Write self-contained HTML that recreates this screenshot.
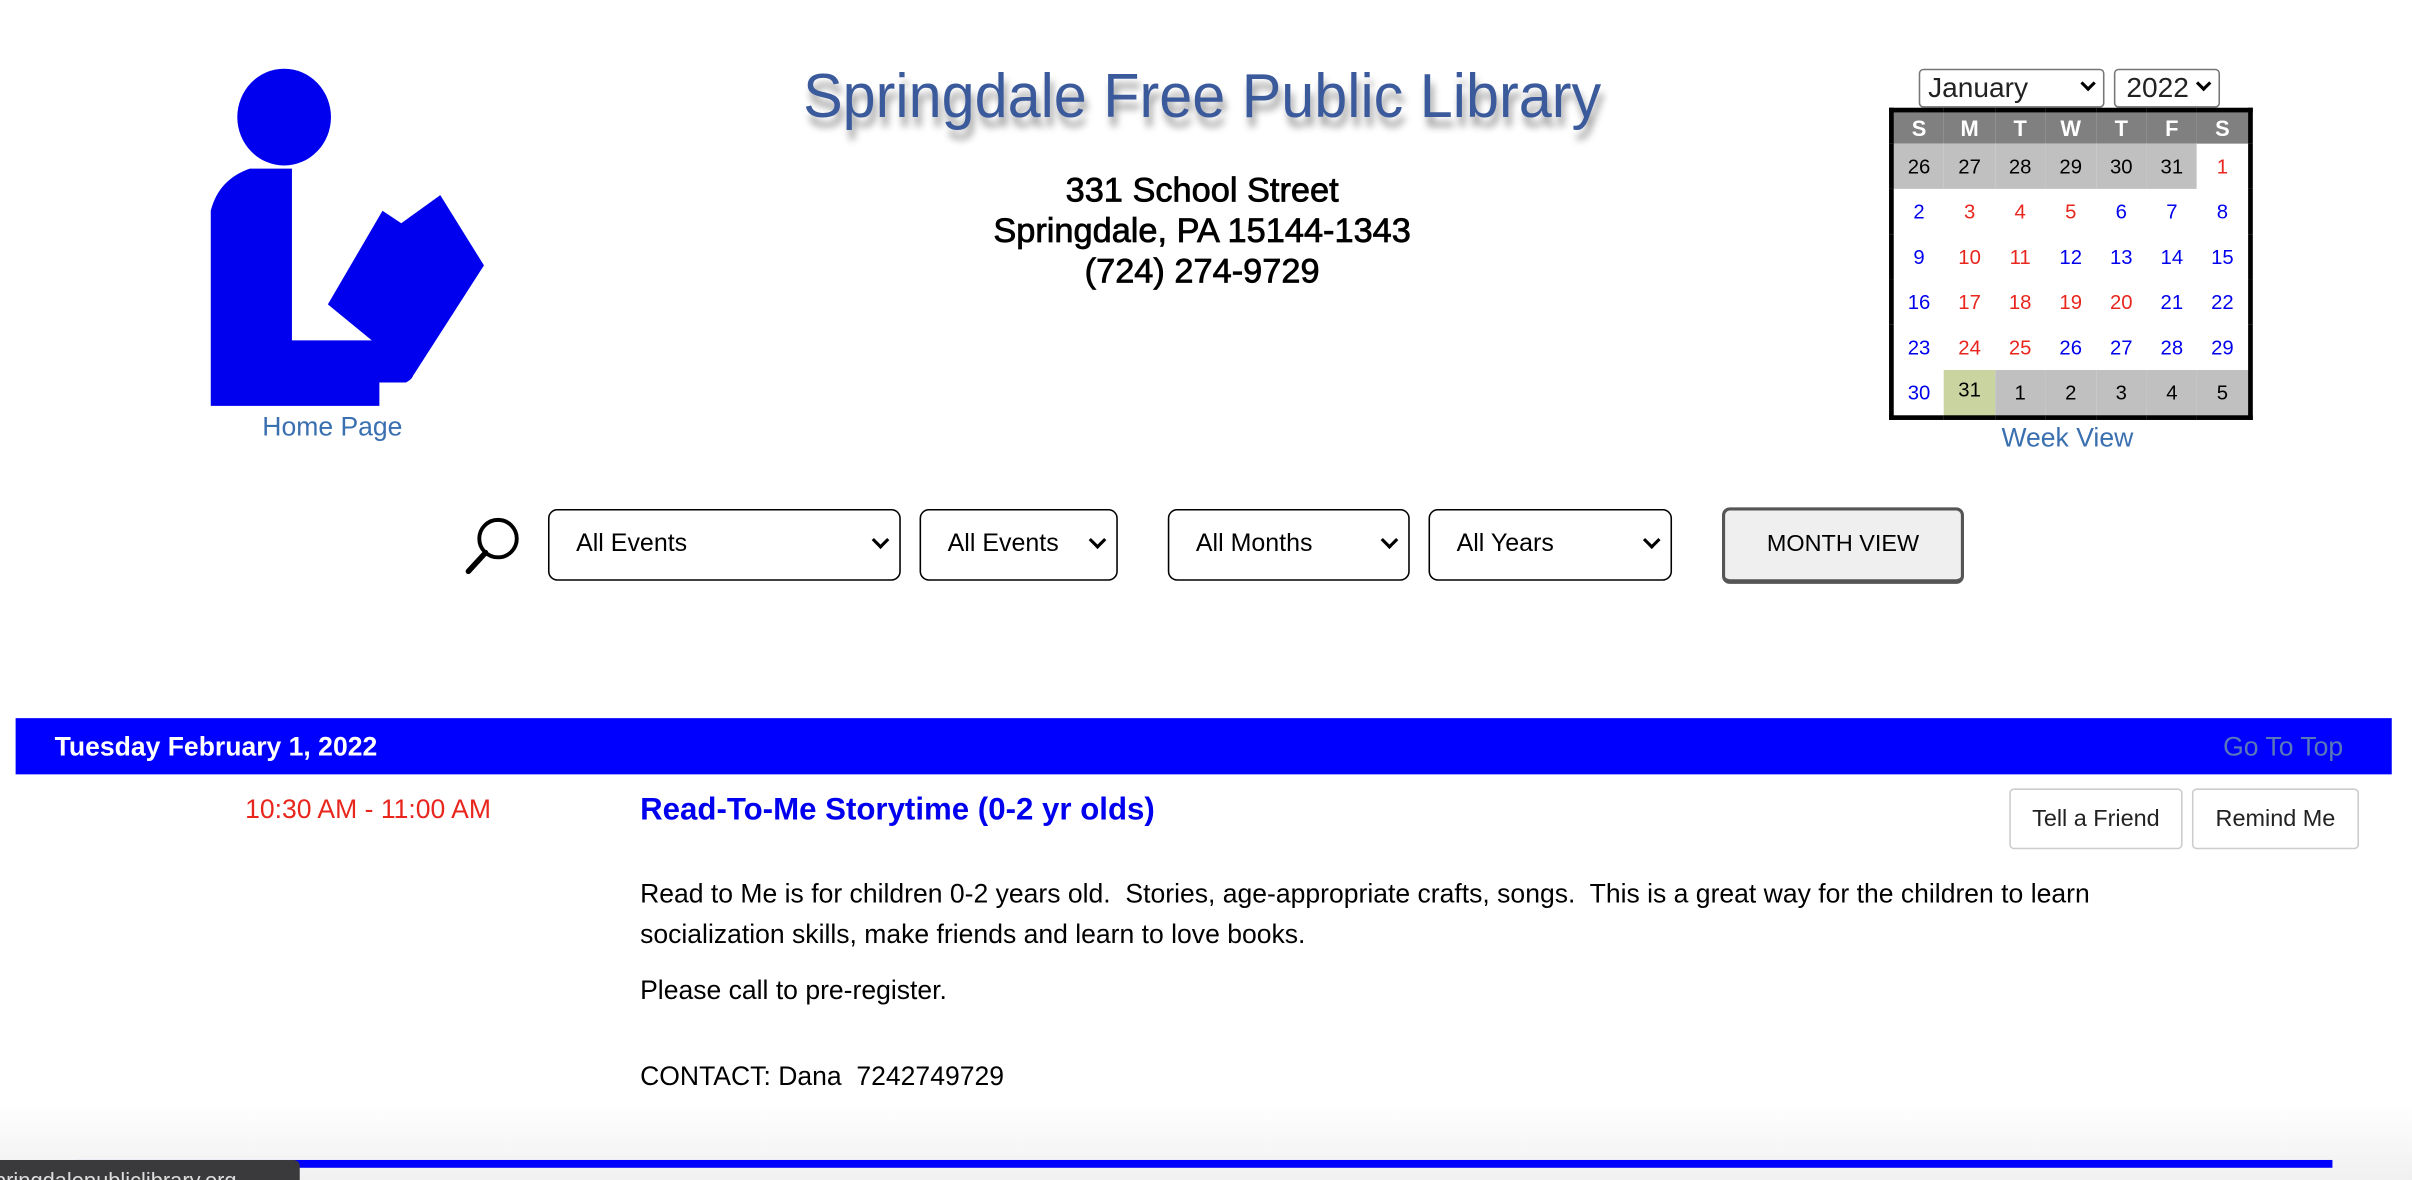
<!DOCTYPE html>
<html><head><meta charset="utf-8"><style>
html,body{margin:0;padding:0;background:#fff;overflow:hidden}
body{width:2412px;height:1180px;position:relative}
#w{position:absolute;left:0;top:0;width:1545px;height:756px;transform:scale(1.5612);transform-origin:0 0;font-family:"Liberation Sans",sans-serif}
.a{position:absolute}
.sel{position:absolute;border:1px solid #000;border-radius:6px;box-sizing:border-box;font-size:16px;line-height:43px;padding-left:17px;color:#000}
.sel:after{content:"";position:absolute;right:8px;top:15px;width:6px;height:6px;border-right:2.5px solid #000;border-bottom:2.5px solid #000;transform:rotate(45deg)}
.sel.sm:after{top:5px;right:6px;width:5px;height:5px;border-width:2.5px}
table.cal{position:absolute;left:1210px;top:69px;border:3px solid #000;border-collapse:collapse;font-size:13px}
table.cal td{width:32.4px;height:29px;text-align:center;padding:0}
table.cal tr.h td{background:#808080;color:#fff;font-weight:bold;font-size:14px;height:20px}
.g{background:#c0c0c0;color:#000}.b{color:#0000ee}.r{color:#e8261e}
.btn{position:absolute;border:1px solid #ccc;border-radius:3px;font-size:15px;line-height:37px;text-align:center;color:#222;box-sizing:border-box;height:39px;top:505px}
.t{position:absolute;left:410px;font-size:17px;color:#000}
</style></head><body><div id="w">
<svg class="a" style="left:130px;top:40px" width="190" height="225" viewBox="0 0 190 225">
<ellipse cx="52" cy="35" rx="30" ry="31" fill="#0000ee"/>
<path d="M5 95 Q10 75 30 68 L57 68 L57 178 L118 178 L130 190 Q140 200 130 205 L113 205 L113 220 L5 220 Z" fill="#0000ee"/>
<path d="M80 155 L115 95 L127 103 L152 85 L180 130 L135 200 Z" fill="#0000ee"/>
</svg>
<div class="a" style="left:168px;top:264px;font-size:17px;color:#3a6fb0">Home Page</div>
<div class="a" style="left:470px;top:40px;width:600px;text-align:center;font-family:'Liberation Sans Narrow','Liberation Sans',sans-serif;font-size:40px;color:#3b5a9c;text-shadow:2px 6px 5px #999;transform:scaleX(0.95)">Springdale Free Public Library</div>
<div class="a" style="left:570px;top:109px;width:400px;text-align:center;font-size:22px;line-height:26px;color:#000;-webkit-text-stroke:0.5px #000">331 School Street<br>Springdale, PA 15144-1343<br>(724) 274-9729</div>
<div class="sel sm" style="left:1229px;top:44px;width:119px;height:25px;line-height:23px;font-size:18px;padding-left:5px;border-color:#777;border-radius:3px;color:#222">January</div>
<div class="sel sm" style="left:1354px;top:44px;width:68px;height:25px;line-height:23px;font-size:18px;padding-left:7px;border-color:#777;border-radius:3px;color:#222">2022</div>
<table class="cal">
<tr class="h"><td>S</td><td>M</td><td>T</td><td>W</td><td>T</td><td>F</td><td>S</td></tr>
<tr><td class="g">26</td><td class="g">27</td><td class="g">28</td><td class="g">29</td><td class="g">30</td><td class="g">31</td><td class="r">1</td></tr>
<tr><td class="b">2</td><td class="r">3</td><td class="r">4</td><td class="r">5</td><td class="b">6</td><td class="b">7</td><td class="b">8</td></tr>
<tr><td class="b">9</td><td class="r">10</td><td class="r">11</td><td class="b">12</td><td class="b">13</td><td class="b">14</td><td class="b">15</td></tr>
<tr><td class="b">16</td><td class="r">17</td><td class="r">18</td><td class="r">19</td><td class="r">20</td><td class="b">21</td><td class="b">22</td></tr>
<tr><td class="b">23</td><td class="r">24</td><td class="r">25</td><td class="b">26</td><td class="b">27</td><td class="b">28</td><td class="b">29</td></tr>
<tr><td class="b">30</td><td style="background:#c9d4a0;vertical-align:top;padding-top:5px;height:24px">31</td><td class="g">1</td><td class="g">2</td><td class="g">3</td><td class="g">4</td><td class="g">5</td></tr>
</table>
<div class="a" style="left:1282px;top:271px;font-size:17px;color:#3a6fb0">Week View</div>
<svg class="a" style="left:296px;top:329px" width="40" height="40" viewBox="0 0 40 40"><circle cx="23" cy="16" r="12" fill="none" stroke="#000" stroke-width="2.5"/><line x1="15" y1="25" x2="4" y2="37" stroke="#000" stroke-width="3.5" stroke-linecap="round"/></svg>
<div class="sel" style="left:351px;top:326px;width:226px;height:46px">All Events</div>
<div class="sel" style="left:589px;top:326px;width:127px;height:46px">All Events</div>
<div class="sel" style="left:748px;top:326px;width:155px;height:46px">All Months</div>
<div class="sel" style="left:915px;top:326px;width:156px;height:46px">All Years</div>
<div class="a" style="left:1103px;top:325px;width:155px;height:49px;box-sizing:border-box;background:#efefef;border:2px solid #555;border-bottom-width:3px;border-radius:5px;text-align:center;line-height:43px;font-size:15px">MONTH VIEW</div>
<div class="a" style="left:10px;top:460px;width:1522px;height:36px;background:#0000ff"></div>
<div class="a" style="left:35px;top:469px;font-size:17px;font-weight:bold;color:#fff">Tuesday February 1, 2022</div>
<div class="a" style="left:1424px;top:469px;font-size:17px;color:#5a78b8">Go To Top</div>
<div class="a" style="left:157px;top:509px;font-size:17px;color:#e8261e">10:30 AM - 11:00 AM</div>
<div class="a" style="left:410px;top:508px;font-size:20px;font-weight:bold;color:#0000ee">Read-To-Me Storytime (0-2 yr olds)</div>
<div class="btn" style="left:1287px;width:111px">Tell a Friend</div>
<div class="btn" style="left:1404px;width:107px">Remind Me</div>
<div class="t" style="top:560px;line-height:26px">Read to Me is for children 0-2 years old.&nbsp; Stories, age-appropriate crafts, songs.&nbsp; This is a great way for the children to learn<br>socialization skills, make friends and learn to love books.</div>
<div class="t" style="top:625px">Please call to pre-register.</div>
<div class="t" style="top:680px">CONTACT: Dana&nbsp; 7242749729</div>
<div class="a" style="left:0;top:705px;width:1545px;height:51px;background:linear-gradient(#fff,#f0f0f0)"></div>
<div class="a" style="left:48px;top:743px;width:1446px;height:5px;background:#0000ff"></div>
<div class="a" style="left:0;top:743px;width:192px;height:25px;background:#3a3a3c;border-radius:0 4px 0 0;color:#ddd;font-size:14px;line-height:27px;overflow:hidden;white-space:nowrap;text-indent:-4px">pringdalepubliclibrary.org</div>
</div></body></html>
